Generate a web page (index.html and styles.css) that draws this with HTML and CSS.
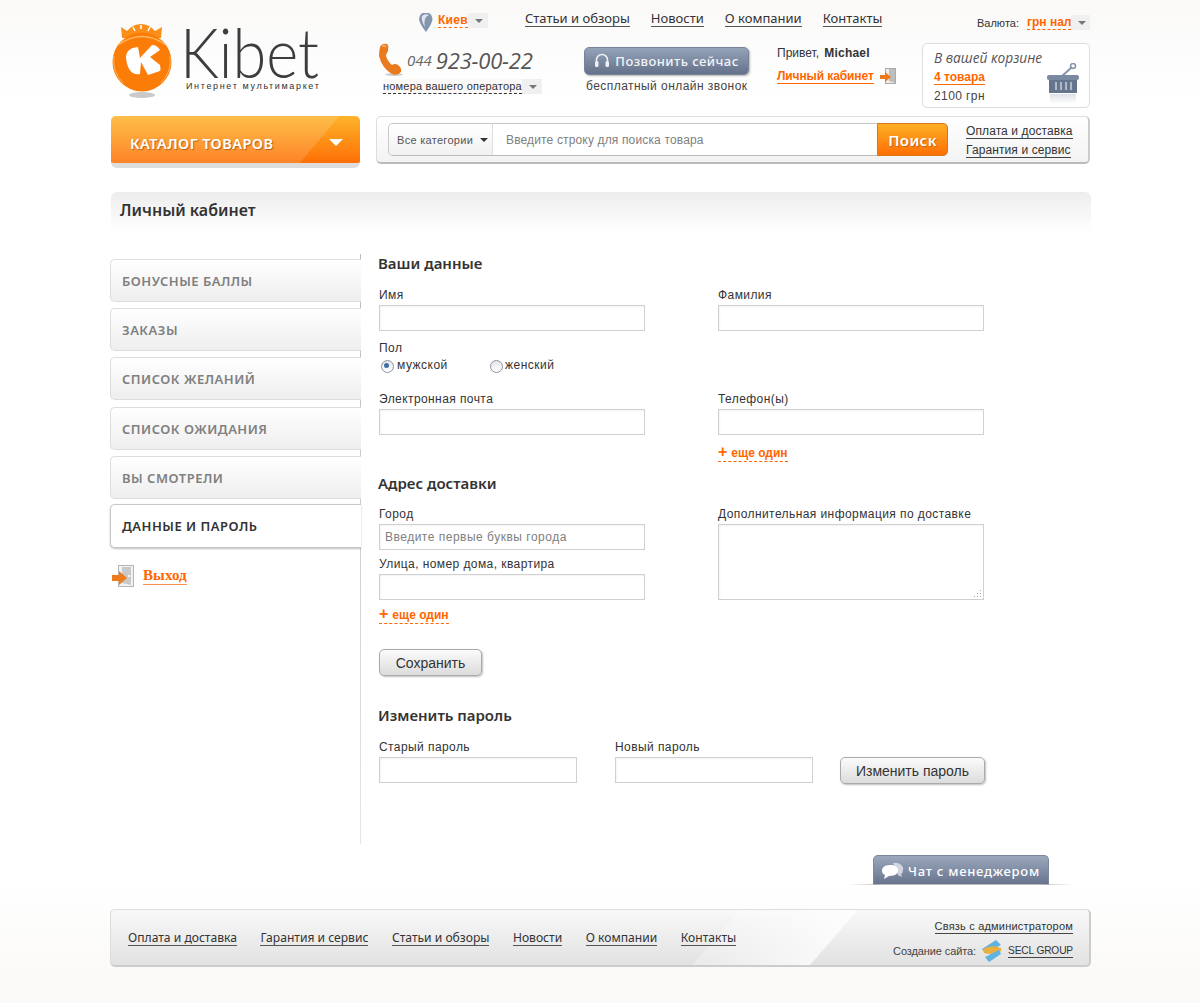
FILE: index.html
```html
<!DOCTYPE html>
<html lang="ru">
<head>
  <meta charset="UTF-8">
  <title>Kibet - Личный кабинет</title>
  <link rel="stylesheet" href="styles.css">
</head>
<body>
<div class="page">
  <header class="header">
    <a class="logo">
      <svg class="logo-mark" width="64" height="78" viewBox="0 0 64 78">
        <ellipse cx="31" cy="75" rx="13" ry="3" fill="#c9c9c9"/>
        <path d="M10 7 L16 11 Q22 4 30 4 Q38 4 44 11 L51 7 L50 18 L11 18 Z" fill="#fb8f1c"/>
        <circle cx="31" cy="42" r="29.500" fill="#fc7c08"/>
        <path d="M7 25 Q31 8 55 25" fill="none" stroke="#ffb65c" stroke-width="1.500"/>
        <path d="M3 36 Q1 52 12 63 M59 36 Q61 52 50 63" fill="none" stroke="#ffb65c" stroke-width="1"/>
        <path d="M22 7 L24 11 M30 5 V9 M39 7 L37 11" stroke="#fff" stroke-width="1.500"/>
        <path d="M15 38 Q15 28 27 27 L29 38 L41 25 Q46 25 49 30 L39 37 L49 45 Q50 50 49 51 L37 55 L30 42 L29 54 Q17 56 15 38 Z" fill="#fff"/>
      </svg>
      <span class="logo-text">
        <span class="logo-name">Kibet</span>
        <span class="logo-sub">Интернет мультимаркет</span>
      </span>
    </a>
    <div class="header-right">
      <div class="top-row">
        <div class="city">
          <svg width="14" height="19" viewBox="0 0 14 19"><path d="M7 19 Q0 10 0 6 A6.500 6.500 0 0 1 13.500 6 Q13.500 10 7 19 Z" fill="#8495ae"/><path d="M3 3 Q6 0 10 2 Q4 4 6 14 Q2 8 3 3 Z" fill="#dfe5ee"/></svg>
          <span class="drop drop-city"><a class="dash-orange">Киев</a><i class="caret"></i></span>
        </div>
        <nav class="top-nav">
          <a>Статьи и обзоры</a><a>Новости</a><a>О компании</a><a>Контакты</a>
        </nav>
        <div class="currency">
          <span>Валюта:</span>
          <span class="drop"><a class="dash-orange dash-tight">грн нал</a><i class="caret caret-small"></i></span>
        </div>
      </div>
      <div class="info-row">
        <div class="phone">
          <div class="phone-line">
            <svg width="26" height="34" viewBox="0 0 26 34"><ellipse cx="16" cy="31.500" rx="9" ry="1.500" fill="#ccc"/><path d="M2 4 Q4 0 9 1 Q11 2 10 8 Q8 11 8 13 Q10 19 14 22 Q17 20 20 22 Q24 25 23 29 Q20 33 14 31 Q4 25 1 13 Q1 8 2 4 Z" fill="#ea7a1e"/><path d="M4 3 Q7 2 8 4" stroke="#f9b77a" stroke-width="1.500" fill="none"/></svg>
            <span class="phone-code">044</span><span class="phone-num">923-00-22</span>
          </div>
          <span class="drop drop-phone"><a class="dash-dark">номера вашего оператора</a><i class="caret"></i></span>
        </div>
        <div class="call">
          <a class="call-btn">
            <svg width="16" height="16" viewBox="0 0 16 16"><path d="M2.500 10 V7 A5.500 5.500 0 0 1 13.500 7 V10" fill="none" stroke="#eef1f5" stroke-width="1.500"/><rect x="1" y="8" width="3.500" height="6" rx="1.500" fill="#eef1f5"/><rect x="11.500" y="8" width="3.500" height="6" rx="1.500" fill="#eef1f5"/></svg>
            Позвонить сейчас
          </a>
          <p class="call-note">бесплатный онлайн звонок</p>
        </div>
        <div class="hello">
          <p class="hello-name">Привет, <b>Michael</b></p>
          <p class="hello-link">
            <a class="link-orange">Личный кабинет</a>
            <svg class="door" width="16" height="16" viewBox="0 0 16 16"><rect x="5.500" y="0.500" width="10" height="15" fill="#ececec" stroke="#aaa"/><path d="M9 1 L15 1 L15 15 L9 13 Z" fill="#bdbdbd"/><path d="M0 7 H5 V4 L11 9 L5 14 V11 H0 Z" fill="#ee7a1e"/></svg>
          </p>
        </div>
        <div class="cart">
          <em class="cart-title">В вашей корзине</em>
          <a class="cart-count">4 товара</a>
          <span class="cart-sum">2100 грн</span>
          <svg class="cart-icon" width="34" height="42" viewBox="0 0 34 42">
            <defs><linearGradient id="cartFade" x1="0" y1="0" x2="0" y2="1"><stop offset="0" stop-color="#dde1e7"/><stop offset="1" stop-color="#fff"/></linearGradient></defs>
            <path d="M15 14 L26 4" stroke="#8495ae" stroke-width="2"/><circle cx="27" cy="3" r="2.500" fill="none" stroke="#8495ae" stroke-width="1.500"/><rect x="1" y="12" width="32" height="5" rx="2" fill="#7a8aa3"/><rect x="3" y="17" width="28" height="13" fill="#66758e"/><path d="M10 19 V27 M15 19 V27 M20 19 V27 M25 19 V27" stroke="#fff" stroke-width="1"/><rect x="4" y="31" width="26" height="10" fill="url(#cartFade)"/>
          </svg>
        </div>
      </div>
    </div>
  </header>

  <div class="bar-row">
    <a class="catalog">Каталог товаров<i class="catalog-caret"></i></a>
    <div class="search">
      <form class="search-box">
        <span class="search-cat">Все категории<i class="caret caret-dark"></i></span>
        <input class="search-input" type="text" placeholder="Введите строку для поиска товара">
        <button class="search-btn" type="button">Поиск</button>
      </form>
      <div class="search-links">
        <a>Оплата и доставка</a>
        <a>Гарантия и сервис</a>
      </div>
    </div>
  </div>

  <h1 class="page-title">Личный кабинет</h1>

  <div class="main">
    <aside class="side">
      <ul class="side-menu">
        <li><a>Бонусные баллы</a></li>
        <li><a>Заказы</a></li>
        <li><a>Список желаний</a></li>
        <li><a>Список ожидания</a></li>
        <li><a>Вы смотрели</a></li>
        <li class="active"><a>Данные и пароль</a></li>
      </ul>
      <p class="logout">
        <svg width="24" height="22" viewBox="0 0 24 22"><rect x="7.500" y="0.500" width="15" height="21" fill="#f2f2f2" stroke="#b5b5b5"/><path d="M11 2 L20 2 L20 20 L11 18 Z" fill="#c9c9c9"/><circle cx="18" cy="11" r="1" fill="#fff"/><path d="M1 10 H8 V6 L16 13 L8 20 V16 H1 Z" fill="#ee7a1e"/></svg>
        <a class="link-orange serif">Выход</a>
      </p>
    </aside>

    <section class="content">
      <h2 class="head">Ваши данные</h2>
      <div class="cols">
        <div class="field"><label>Имя</label><input type="text"></div>
        <div class="field"><label>Фамилия</label><input type="text"></div>
      </div>
      <div class="gender">
        <label>Пол</label>
        <div class="radios">
          <span class="radio radio-on">мужской</span>
          <span class="radio">женский</span>
        </div>
      </div>
      <div class="cols cols-mail">
        <div class="field"><label>Электронная почта</label><input type="text"></div>
        <div class="field">
          <label>Телефон(ы)</label><input type="text">
          <a class="more"><b class="plus">+</b>еще один</a>
        </div>
      </div>

      <h2 class="head head-addr">Адрес доставки</h2>
      <div class="cols cols-addr">
        <div>
          <div class="field"><label>Город</label><input type="text" placeholder="Введите первые буквы города"></div>
          <div class="field field-street"><label>Улица, номер дома, квартира</label><input type="text"></div>
          <a class="more"><b class="plus">+</b>еще один</a>
        </div>
        <div class="field field-note">
          <label>Дополнительная информация по доставке</label>
          <textarea></textarea>
          <svg class="grip" width="9" height="9" viewBox="0 0 9 9"><path d="M7 1h1v1H7zM4 4h1v1H4zM7 4h1v1H7zM1 7h1v1H1zM4 7h1v1H4zM7 7h1v1H7z" fill="#aaa"/></svg>
        </div>
      </div>
      <button class="btn btn-save" type="button">Сохранить</button>

      <h2 class="head head-pass">Изменить пароль</h2>
      <div class="pass-row">
        <div class="field"><label>Старый пароль</label><input type="password"></div>
        <div class="field"><label>Новый пароль</label><input type="password"></div>
        <button class="btn btn-pass" type="button">Изменить пароль</button>
      </div>
    </section>
  </div>

  <div class="chat-row">
    <a class="chat">
      <svg width="24" height="18" viewBox="0 0 24 18"><path d="M12 1 A8 6 0 0 1 22 8 Q22 11 20 12 L21 15 L17 13 Z" fill="#cfd6e0"/><path d="M9 3 C3 3 1 6 1 9 C1 11 2 12 4 13 L3 17 L8 14 C15 14 17 11 17 8 C17 5 14 3 9 3 Z" fill="#fff"/></svg>
      Чат с менеджером
    </a>
  </div>

  <footer class="footer">
    <nav class="foot-nav">
      <a>Оплата и доставка</a><a>Гарантия и сервис</a><a>Статьи и обзоры</a><a>Новости</a><a>О компании</a><a>Контакты</a>
    </nav>
    <div class="foot-right">
      <a>Связь с администратором</a>
      <p class="made">
        Создание сайта:
        <svg width="22" height="24" viewBox="0 0 22 24"><path d="M15 1 L20 6 L4 14 L1 10 Z" fill="#5fb3e0"/><path d="M2 10 Q10 5 20 9 Q21 13 17 14 Q10 16 3 14 Z" fill="#e9b040"/><path d="M18 11 L20 15 L8 23 L4 18 Z" fill="#5fb3e0"/></svg>
        <a class="secl">SECL GROUP</a>
      </p>
    </div>
  </footer>
</div>
</body>
</html>
```

FILE: styles.css
```css
* {
  box-sizing: border-box;
}

body {
  margin: 0;
  font-family: "Liberation Sans", Arial, sans-serif;
  font-size: 12px;
  color: #333;
  background:
    linear-gradient(#faf9f8, rgba(255, 255, 255, 0) 100px),
    linear-gradient(#fff 880px, #fbfaf8 970px);
}

a {
  cursor: pointer;
}

p {
  margin: 0;
}

.page {
  width: 982px;
  height: 1003px;
  margin: 0 auto;
  padding-left: 2px;
}

/* header */
.header {
  display: flex;
  height: 116px;
}

.logo {
  display: flex;
  width: 267px;
  padding-top: 20px;
}

.logo-mark {
  flex: none;
}

.logo-text {
  display: flex;
  flex-direction: column;
  margin: 3px 0 0 11px;
}

.logo-name {
  display: block;
  width: 134px;
  margin-left: -6px;
  font-family: Lato, sans-serif;
  font-weight: 300;
  font-size: 68px;
  line-height: 58px;
  color: #3d3d3d;
  transform: scaleX(.9);
  transform-origin: left;
}

.logo-sub {
  font-size: 9px;
  line-height: 10px;
  letter-spacing: 1.650px;
  color: #333;
  white-space: nowrap;
}

.header-right {
  width: 713px;
}

.top-row {
  display: flex;
  height: 43px;
  padding-top: 10px;
}

.city {
  display: flex;
  align-items: flex-start;
  gap: 5px;
  width: 147px;
  padding-left: 41px;
  padding-top: 3px;
}

.drop {
  display: inline-flex;
  align-items: center;
  background: #f0f0f0;
  height: 15px;
}

.drop a {
  background: #faf9f8;
  line-height: 14px;
}

.caret {
  display: block;
  width: 0;
  height: 0;
  margin: 1px 5px 0 7px;
  border: 4px solid transparent;
  border-top-color: #777;
  border-bottom: 0;
}

.caret-small {
  margin-left: 7px;
  margin-right: 4px;
}

.caret-dark {
  border-top-color: #333;
  margin-left: 7px;
  margin-right: 0;
}

.dash-orange {
  font-weight: bold;
  font-size: 12px;
  letter-spacing: .3px;
  color: #f60;
  border-bottom: 1px dashed #f60;
}

.dash-tight {
  letter-spacing: 0;
}

.dash-dark {
  font-size: 11px;
  letter-spacing: .2px;
  color: #333;
  border-bottom: 1px dashed #333;
}

.top-nav {
  display: flex;
  gap: 21px;
  width: 452px;
}

.top-nav a {
  font-family: "Noto Sans", sans-serif;
  font-size: 13px;
  line-height: 16px;
  height: 17px;
  color: #333;
  border-bottom: 1px solid #555;
  white-space: nowrap;
}

.currency {
  display: flex;
  align-items: center;
  gap: 8px;
  height: 17px;
  margin-top: 4px;
  font-size: 11px;
  white-space: nowrap;
}

.info-row {
  display: flex;
}

.phone {
  width: 206px;
}

.phone-line {
  display: flex;
  align-items: center;
  height: 34px;
}

.phone-code {
  margin-left: 3px;
  font-family: "Open Sans", sans-serif;
  font-style: italic;
  font-size: 15px;
  color: #666;
}

.phone-num {
  margin-left: 4px;
  font-family: "Open Sans", sans-serif;
  font-style: italic;
  font-size: 22px;
  color: #555;
  letter-spacing: -.2px;
}

.drop-phone {
  margin: 2px 0 0 5px;
}

.call {
  width: 193px;
  padding-top: 4px;
}

.call-btn {
  display: flex;
  align-items: center;
  justify-content: center;
  gap: 5px;
  width: 165px;
  height: 28px;
  border: 1px solid #77849a;
  border-radius: 5px;
  font-family: "Noto Sans", sans-serif;
  font-weight: 500;
  font-size: 13px;
  letter-spacing: .45px;
  color: #f2f4f7;
  background: linear-gradient(#95a3b9, #64718a);
  box-shadow: 1px 1px 2px rgba(0, 0, 0, .3);
  white-space: nowrap;
}

.call-note {
  margin: 4px 0 0 2px;
  font-size: 12px;
  letter-spacing: .45px;
  color: #444;
  white-space: nowrap;
}

.hello {
  width: 145px;
  padding-top: 3px;
}

.hello-name {
  line-height: 14px;
  font-size: 12px;
}

.hello-name b {
  margin-left: 2px;
  letter-spacing: .2px;
}

.hello-link {
  display: flex;
  align-items: center;
  gap: 6px;
  margin-top: 8px;
}

.link-orange {
  font-weight: bold;
  font-size: 12px;
  letter-spacing: -.1px;
  color: #f60;
  border-bottom: 1px solid #f60;
}

.link-orange.serif {
  font-family: "Liberation Serif", serif;
  font-size: 15px;
  letter-spacing: .1px;
  border-bottom: 1px solid #f9924d;
}

.cart {
  position: relative;
  width: 168px;
  height: 65px;
  padding: 6px 0 0 11px;
  border: 1px solid #ddd;
  border-radius: 5px;
  background: #fff;
}

.cart-title {
  display: block;
  font-family: "Open Sans", sans-serif;
  font-size: 13.700px;
  line-height: 16px;
  color: #555;
  white-space: nowrap;
}

.cart-count {
  display: inline-block;
  margin-top: 5px;
  font-weight: bold;
  font-size: 12px;
  line-height: 13px;
  color: #f60;
  border-bottom: 1px solid #f60;
}

.cart-sum {
  display: block;
  margin-top: 4px;
  font-size: 12px;
  letter-spacing: .4px;
  color: #444;
}

.cart-icon {
  position: absolute;
  right: 9px;
  top: 19px;
}

/* catalog + search */
.bar-row {
  display: flex;
  gap: 16px;
}

.catalog {
  position: relative;
  display: block;
  width: 249px;
  height: 52px;
  padding: 18px 0 0 19px;
  border-bottom: 5px solid #ddd;
  border-radius: 5px 5px 6px 6px;
  font-family: "Noto Sans", sans-serif;
  font-weight: 600;
  font-size: 14.500px;
  letter-spacing: .45px;
  line-height: 18px;
  text-transform: uppercase;
  color: #fff;
  text-shadow: 1px 1px 1px rgba(120, 50, 0, .5);
  background:
    linear-gradient(130deg, rgba(255, 255, 255, .14) 0, rgba(255, 255, 255, .14) 79%, transparent 79.300%),
    linear-gradient(#fdb42b, #fe6f04);
}

.catalog-caret {
  position: absolute;
  right: 17px;
  top: 23px;
  border: 7px solid transparent;
  border-top-color: #fff;
  border-bottom: 0;
}

.search {
  display: flex;
  width: 714px;
  height: 48px;
  padding: 6px 0 0 11px;
  border: 1px solid #ddd;
  border-bottom: 2px solid #bbb;
  border-right: 2px solid #ccc;
  border-radius: 5px;
  background: linear-gradient(#fff, #f3f3f3);
}

.search-box {
  display: flex;
  width: 560px;
  height: 33px;
  border: 1px solid #c8c8c8;
  border-bottom-color: #bbb;
  border-radius: 5px;
  background: #fff;
}

.search-cat {
  display: flex;
  align-items: center;
  width: 104px;
  padding-left: 8px;
  font-size: 11px;
  letter-spacing: .3px;
  color: #555;
  background: linear-gradient(#fff, #f1f1f1);
  border-right: 1px solid #ddd;
  border-radius: 5px 0 0 5px;
  white-space: nowrap;
}

.search-input {
  flex: 1;
  min-width: 0;
  padding: 0 0 0 13px;
  border: 0;
  outline: 0;
  font-family: inherit;
  font-size: 12px;
  letter-spacing: .15px;
  background: transparent;
}

.search-input::placeholder,
.field input::placeholder {
  color: #808080;
  opacity: 1;
}

.search-btn {
  width: 71px;
  margin: -1px -1px -1px 0;
  padding: 0;
  border: 1px solid #d9761a;
  border-radius: 0 5px 5px 0;
  font-family: "Noto Sans", sans-serif;
  font-weight: 600;
  font-size: 15px;
  letter-spacing: .4px;
  color: #fff;
  text-shadow: 1px 1px 1px rgba(120, 50, 0, .4);
  background: linear-gradient(#fdaf26, #fe6f04);
}

.search-links {
  display: flex;
  flex-direction: column;
  align-items: flex-start;
  gap: 4px;
  margin: 1px 0 0 18px;
}

.search-links a {
  font-size: 12px;
  letter-spacing: .1px;
  line-height: 14px;
  color: #333;
  border-bottom: 1px solid #444;
  white-space: nowrap;
}

/* title */
.page-title {
  width: 980px;
  height: 41px;
  margin: 24px 0 0;
  padding: 7px 0 0 9px;
  border-radius: 6px 6px 0 0;
  font-family: "Noto Sans", sans-serif;
  font-weight: 600;
  font-size: 16px;
  line-height: 22px;
  color: #333;
  background: linear-gradient(#ededed, #fff);
}

/* main */
.main {
  display: flex;
  height: 590px;
  margin-top: 21px;
}

.side {
  width: 251px;
  margin-left: -1px;
  padding-top: 5px;
  border-right: 1px solid;
  border-image: linear-gradient(#bbb, #e6e6e6) 1;
}

.side-menu {
  display: flex;
  flex-direction: column;
  gap: 6.200px;
  margin: 0;
  padding: 0;
  list-style: none;
}

.side-menu a {
  display: block;
  height: 43px;
  margin-right: -1px;
  padding-left: 11px;
  border: 1px solid #ddd;
  border-right: 0;
  border-radius: 5px 0 0 5px;
  font-family: "Noto Sans", sans-serif;
  font-weight: 600;
  font-size: 13px;
  line-height: 42px;
  letter-spacing: .5px;
  text-transform: uppercase;
  color: #808080;
  background: linear-gradient(#fff, #eee);
}

.side-menu .active {
  margin-top: -1px;
}

.side-menu .active a {
  height: 44px;
  border-color: #c8c8c8;
  color: #333;
  background: #fff;
  box-shadow: 0 1px 2px rgba(0, 0, 0, .25);
}

.logout {
  display: flex;
  align-items: center;
  gap: 8px;
  margin: 17px 0 0 1px;
}

.content {
  flex: 1;
  padding-left: 17px;
}

.head {
  height: 20px;
  margin: 0 0 14px;
  font-family: "Noto Sans", sans-serif;
  font-weight: 600;
  font-size: 15px;
  line-height: 18px;
  color: #333;
}

.head-addr {
  margin: 12px 0 13px;
}

.head-pass {
  margin: 30px 0 14px;
}

.cols {
  display: grid;
  grid-template-columns: 266px 266px;
  column-gap: 73px;
  padding-left: 1px;
}

.field label,
.gender label {
  display: block;
  height: 14px;
  margin-bottom: 3px;
  font-size: 12px;
  line-height: 15px;
  letter-spacing: .42px;
  color: #333;
  white-space: nowrap;
}

.field input,
.field textarea {
  display: block;
  width: 100%;
  height: 26px;
  padding: 0 5px;
  border: 1px solid #d0d0d0;
  border-radius: 0;
  outline: 0;
  font-family: inherit;
  font-size: 12px;
  letter-spacing: .5px;
  background: #fff;
  box-shadow: inset 1px 1px 2px rgba(0, 0, 0, .05);
}

.field textarea {
  height: 76px;
  resize: none;
}

.field-note {
  position: relative;
  align-self: start;
}

.grip {
  position: absolute;
  right: 2px;
  bottom: 2px;
}

.gender {
  margin: 10px 0 20px 1px;
}

.radios {
  display: flex;
  padding-left: 2px;
}

.radio {
  position: relative;
  width: 109px;
  height: 14px;
  padding-left: 16px;
  font-size: 12px;
  line-height: 15px;
  letter-spacing: .5px;
  color: #333;
}

.radio + .radio {
  padding-left: 15px;
}

.radio::before {
  content: "";
  position: absolute;
  left: 0;
  top: 2px;
  width: 11px;
  height: 11px;
  border: 1px solid #8a95a5;
  border-radius: 50%;
  background: linear-gradient(#e6e6e6, #fff);
}

.radio-on::after {
  content: "";
  position: absolute;
  left: 3px;
  top: 5px;
  width: 5px;
  height: 5px;
  border-radius: 50%;
  background: #3d6fa5;
}

.more {
  display: inline-block;
  height: 16px;
  margin-top: 11px;
  font-weight: bold;
  font-size: 12px;
  line-height: 14px;
  color: #f60;
  border-bottom: 1px dashed #f60;
  white-space: nowrap;
}

.plus {
  margin-right: 4px;
  font-size: 16px;
  line-height: 12px;
}

.field-street {
  margin-top: 7px;
}

.cols-addr .more {
  margin-top: 8px;
}

.btn {
  display: block;
  height: 27px;
  padding: 0;
  border: 1px solid #aaa;
  border-radius: 5px;
  font-family: "Liberation Sans", sans-serif;
  font-size: 14px;
  color: #333;
  background: linear-gradient(#fbfbfb, #dcdcdc);
  box-shadow: 1px 1px 2px rgba(0, 0, 0, .25);
}

.btn-save {
  width: 103px;
  margin: 25px 0 0 1px;
}

.pass-row {
  display: grid;
  grid-template-columns: 198px 198px 145px;
  column-gap: 38px;
  padding-left: 1px;
}

.btn-pass {
  align-self: end;
  justify-self: start;
  width: 145px;
  margin: 0 0 -1px -11px;
}

/* chat + footer */
.chat-row {
  position: relative;
  display: flex;
  justify-content: flex-end;
  height: 30px;
  margin-top: 11px;
  padding-right: 42px;
}

.chat-row::after {
  content: "";
  position: absolute;
  width: 224px;
  height: 1px;
  margin: 29px -24px 0 0;
  background: linear-gradient(90deg, transparent, #bbb 15%, #bbb 85%, transparent);
}

.chat {
  display: flex;
  align-items: center;
  gap: 3px;
  width: 176px;
  padding-left: 7px;
  border: 1px solid #7b879b;
  border-bottom: 0;
  border-radius: 5px 5px 0 0;
  font-family: "Noto Sans", sans-serif;
  font-weight: 500;
  font-size: 13px;
  letter-spacing: .75px;
  color: #fff;
  background: linear-gradient(#9aa7bc, #66738c);
  white-space: nowrap;
}

.footer {
  display: flex;
  justify-content: space-between;
  width: 981px;
  height: 58px;
  margin-top: 24px;
  margin-left: -1px;
  padding: 0 16px 0 17px;
  border: 1px solid #ddd;
  border-right: 2px solid #ccc;
  border-bottom: 2px solid #ccc;
  border-radius: 5px;
  background:
    linear-gradient(131deg, transparent 61.200%, rgba(255, 255, 255, .25) 61.400%, rgba(255, 255, 255, .75) 72.700%, transparent 72.900%),
    linear-gradient(#f8f8f8, #e2e2e2);
}

.foot-nav {
  display: flex;
  gap: 23.500px;
  padding-top: 20px;
}

.foot-nav a {
  height: 16px;
  font-family: "Noto Sans", sans-serif;
  font-size: 12.100px;
  line-height: 15px;
  color: #333;
  border-bottom: 1px solid #555;
  white-space: nowrap;
}

.foot-right {
  display: flex;
  flex-direction: column;
  align-items: flex-end;
  padding-top: 10px;
}

.foot-right a {
  font-size: 11px;
  line-height: 13px;
  letter-spacing: .2px;
  color: #333;
  border-bottom: 1px solid #444;
  white-space: nowrap;
}

.made {
  display: flex;
  align-items: center;
  gap: 5px;
  margin-top: 5px;
  font-size: 11px;
  letter-spacing: -.1px;
  color: #444;
  white-space: nowrap;
}

.foot-right .secl {
  font-size: 10.200px;
  letter-spacing: -.15px;
}
```
